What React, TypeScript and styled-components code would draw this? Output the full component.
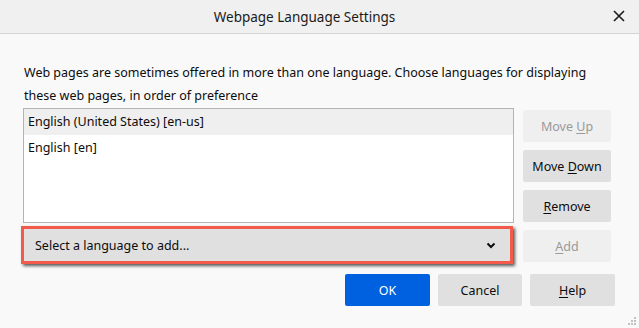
import React from 'react';
import styled, { createGlobalStyle } from 'styled-components';

const GlobalStyle = createGlobalStyle`
  html, body {
    margin: 0;
    padding: 0;
    background: #f9f9f9;
  }
  body {
    font-family: "Noto Sans", "Open Sans", sans-serif;
    color: #0c0c0d;
  }
`;

const Dialog = styled.div`
  position: relative;
  width: 639px;
  height: 328px;
  background: #f9f9f9;
  overflow: hidden;
`;

const TitleBar = styled.div`
  height: 33px;
  background: #f0f0f0;
  border-bottom: 1px solid #d4d4d4;
  display: flex;
  align-items: center;
  justify-content: center;
  padding-right: 30px;
  position: relative;
  font-size: 13.5px;
  color: #1a1a1a;
`;

const CloseButton = styled.div`
  position: absolute;
  right: 13px;
  top: 9px;
  width: 14px;
  height: 14px;
`;

const Content = styled.div`
  padding: 27px 0 0 23px;
`;

const Description = styled.p`
  margin: 0 0 0 1px;
  font-size: 12.5px;
  line-height: 23px;
  width: 590px;
`;

const MainRow = styled.div`
  display: flex;
  margin-top: 1px;
`;

const LeftCol = styled.div`
  width: 491px;
  display: flex;
  flex-direction: column;
`;

const ListBox = styled.div`
  height: 113px;
  background: #fff;
  border: 1px solid #b4b4b4;
`;

const ListItem = styled.div<{ $selected?: boolean }>`
  height: 26px;
  line-height: 26px;
  padding-left: 4px;
  font-size: 12.5px;
  background: ${p => (p.$selected ? '#efefef' : 'transparent')};
`;

const SelectFrame = styled.div`
  margin: 3px 0 0 -2px;
  width: 486px;
  height: 32px;
  border: 3px solid #f25b4c;
  box-shadow: 2px 2px 3px rgba(0, 0, 0, 0.65);
  background: #e0e0e0;
  display: flex;
  align-items: center;
  justify-content: space-between;
`;

const SelectLabel = styled.span`
  font-size: 12.5px;
  padding-left: 11px;
`;

const Chevron = styled.svg`
  margin-right: 14px;
`;

const ButtonCol = styled.div`
  margin-left: 9px;
  padding-top: 2px;
  display: flex;
  flex-direction: column;
  gap: 8px;
`;

const Button = styled.div<{ $disabled?: boolean; $primary?: boolean; $w?: number }>`
  width: ${p => p.$w ?? 88}px;
  height: 32px;
  border-radius: 2px;
  display: flex;
  align-items: center;
  justify-content: center;
  font-size: 12.5px;
  background: ${p => (p.$primary ? '#0061e0' : p.$disabled ? '#efefef' : '#e0e0e0')};
  color: ${p => (p.$primary ? '#fff' : p.$disabled ? '#9a9a9a' : '#0c0c0d')};
`;

const Key = styled.span`
  text-decoration: underline;
  text-underline-offset: 2px;
`;

const BottomRow = styled.div`
  display: flex;
  justify-content: flex-end;
  gap: 8px;
  margin-top: 10px;
  padding-right: 24px;
`;

const Grip = styled.svg`
  position: absolute;
  right: 2px;
  bottom: 2px;
`;

const App = () => {
  return (
    <Dialog>
      <GlobalStyle />
      <TitleBar>
        Webpage Language Settings
        <CloseButton>
          <svg width="14" height="14" viewBox="0 0 14 14">
            <path d="M2 2 L12 12 M12 2 L2 12" stroke="#1a1a1a" strokeWidth="1.6" />
          </svg>
        </CloseButton>
      </TitleBar>
      <Content>
        <Description>
          Web pages are sometimes offered in more than one language. Choose languages for displaying
          these web pages, in order of preference
        </Description>
        <MainRow>
          <LeftCol>
            <ListBox>
              <ListItem $selected>English (United States) [en-us]</ListItem>
              <ListItem>English [en]</ListItem>
            </ListBox>
            <SelectFrame>
              <SelectLabel>Select a language to add...</SelectLabel>
              <Chevron width="10" height="7" viewBox="0 0 10 7">
                <path d="M1.5 1.5 L5 5 L8.5 1.5" stroke="#0c0c0d" strokeWidth="2" fill="none" />
              </Chevron>
            </SelectFrame>
          </LeftCol>
          <ButtonCol>
            <Button $disabled>Move&nbsp;<Key>U</Key>p</Button>
            <Button>Move&nbsp;<Key>D</Key>own</Button>
            <Button><Key>R</Key>emove</Button>
            <Button $disabled><Key>A</Key>dd</Button>
          </ButtonCol>
        </MainRow>
        <BottomRow>
          <Button $primary $w={85}>OK</Button>
          <Button $w={84}>Cancel</Button>
          <Button $w={85}><Key>H</Key>elp</Button>
        </BottomRow>
      </Content>
      <Grip width="10" height="10" viewBox="0 0 10 10">
        <g fill="#c2c2c2">
          <rect x="7" y="1" width="2" height="2" />
          <rect x="4" y="4" width="2" height="2" />
          <rect x="7" y="4" width="2" height="2" />
          <rect x="1" y="7" width="2" height="2" />
          <rect x="4" y="7" width="2" height="2" />
          <rect x="7" y="7" width="2" height="2" />
        </g>
      </Grip>
    </Dialog>
  );
};

export default App;
